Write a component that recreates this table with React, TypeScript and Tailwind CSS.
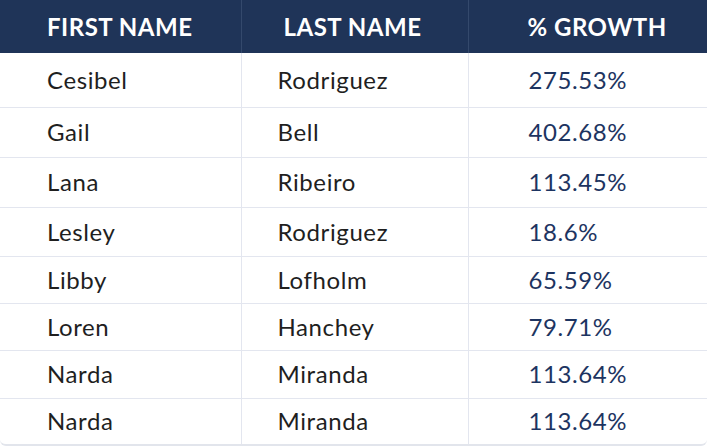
const rows = [
  { first: 'Cesibel', last: 'Rodriguez', growth: '275.53%', h: 'h-[54px]' },
  { first: 'Gail', last: 'Bell', growth: '402.68%', h: 'h-[50px]' },
  { first: 'Lana', last: 'Ribeiro', growth: '113.45%', h: 'h-[50px]' },
  { first: 'Lesley', last: 'Rodriguez', growth: '18.6%', h: 'h-[49px]' },
  { first: 'Libby', last: 'Lofholm', growth: '65.59%', h: 'h-[47px]' },
  { first: 'Loren', last: 'Hanchey', growth: '79.71%', h: 'h-[47px]' },
  { first: 'Narda', last: 'Miranda', growth: '113.64%', h: 'h-[48px]' },
  { first: 'Narda', last: 'Miranda', growth: '113.64%', h: 'h-[46px]' },
];

export default function App() {
  return (
    <div className="w-[707px] h-[446px] bg-white font-['Lato','Liberation_Sans',sans-serif]">
      <div className="overflow-hidden rounded-b-md border-b-2 border-[#e2e5ec]">
        <table className="w-full table-fixed border-collapse">
          <colgroup>
            <col className="w-[241px]" />
            <col className="w-[227px]" />
            <col />
          </colgroup>
          <thead>
            <tr className="h-[53px] bg-[#1f3458] text-white text-[24px] font-bold tracking-[0.5px]">
              <th className="pl-[47px] text-left border-r border-[#34496c]">FIRST NAME</th>
              <th className="pl-[42px] text-left border-r border-[#34496c]">LAST NAME</th>
              <th className="pl-[59px] text-left">% GROWTH</th>
            </tr>
          </thead>
          <tbody className="text-[24px] tracking-[0.6px]">
            {rows.map((r, i) => (
              <tr key={i} className={`${r.h} border-t border-[#e3e6ef] first:border-t-0`}>
                <td className="pl-[47px] text-[#1f1f1f] border-r border-[#e3e6ef]">{r.first}</td>
                <td className="pl-[36px] text-[#1f1f1f] border-r border-[#e3e6ef]">{r.last}</td>
                <td className="pl-[60px] text-[#1d3461]">{r.growth}</td>
              </tr>
            ))}
          </tbody>
        </table>
      </div>
    </div>
  );
}
